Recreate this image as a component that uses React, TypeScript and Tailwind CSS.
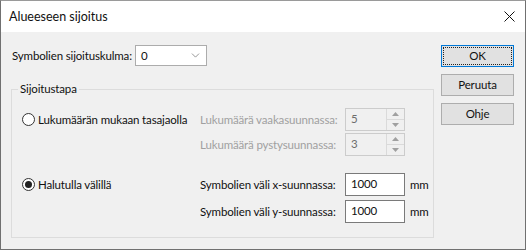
import { ChevronDown } from "lucide-react";

function Radio({ checked }: { checked?: boolean }) {
  return (
    <span className="grid size-[13px] shrink-0 place-items-center rounded-full border border-[#333] bg-white">
      {checked && <span className="size-[7px] rounded-full bg-[#222]" />}
    </span>
  );
}

function DlgButton({ label, focused }: { label: string; focused?: boolean }) {
  return (
    <button
      className={
        focused
          ? "grid h-[22px] w-[73px] place-items-center border border-[#0078d7] bg-[#e1e1e1] p-[1px]"
          : "grid h-[22px] w-[73px] place-items-center border border-[#adadad] bg-[#e1e1e1]"
      }
    >
      <span
        className={
          focused
            ? "grid h-full w-full place-items-center border border-dotted border-[#222]"
            : "grid h-full w-full place-items-center"
        }
      >
        {label}
      </span>
    </button>
  );
}

function SpinBox({ value }: { value: string }) {
  return (
    <div className="flex h-[23px] w-[60px] border border-[#cccccc] bg-[#f0f0f0]">
      <span className="flex-1 pl-[5px] pt-[2px] text-[#6d6d6d]">{value}</span>
      <span className="flex w-[18px] flex-col border-l border-[#dadada]">
        <span className="grid flex-1 place-items-center">
          <svg width="7" height="4" viewBox="0 0 7 4">
            <path d="M0 4 L3.5 0 L7 4 Z" fill="#a0a0a0" />
          </svg>
        </span>
        <span className="grid flex-1 place-items-center border-t border-[#dadada]">
          <svg width="7" height="4" viewBox="0 0 7 4">
            <path d="M0 0 L3.5 4 L7 0 Z" fill="#a0a0a0" />
          </svg>
        </span>
      </span>
    </div>
  );
}

function TextBox({ value }: { value: string }) {
  return (
    <div className="h-[23px] w-[60px] border border-[#7a7a7a] bg-white pl-[5px] pt-[2px]">
      {value}
    </div>
  );
}

export default function App() {
  return (
    <div className="h-[251px] w-[526px] bg-white font-['Segoe_UI','Lato',sans-serif] text-[11.5px] leading-[16px] tracking-[-0.15px] text-[#111]">
      <div className="flex h-[250px] w-[526px] flex-col border border-t-[#9a9a9a] border-x-[#707070] border-b-[#707070] bg-[#f0f0f0]">
        <div className="flex h-[31px] shrink-0 items-center justify-between bg-white pl-[8px] pr-[10px]">
          <span className="text-[12.5px] tracking-normal">Alueeseen sijoitus</span>
          <svg width="11" height="11" viewBox="0 0 11 11">
            <path d="M0.5 0.5 L10.5 10.5 M10.5 0.5 L0.5 10.5" stroke="#111" strokeWidth="1" />
          </svg>
        </div>

        <div className="flex flex-1 pl-[10px]">
          <div className="flex w-[430px] flex-col pt-[13px]">
            <div className="flex h-[21px] items-center">
              <span className="w-[124px] whitespace-nowrap pl-[1px]">Symbolien sijoituskulma:</span>
              <div className="flex h-[21px] w-[72px] items-center justify-between border border-[#acacac] bg-white pl-[5px] pr-[4px]">
                <span>0</span>
                <ChevronDown className="size-[13px] text-[#606060]" strokeWidth={1.2} />
              </div>
            </div>

            <fieldset className="mt-[15px] h-[157px] w-[423px] border border-[#dcdcdc] px-0">
              <legend className="ml-[6px] px-[2px]">Sijoitustapa</legend>

              <div className="flex flex-col pt-[11px]">
                <div className="flex h-[23px] items-center">
                  <div className="flex w-[188px] items-center gap-[3px] pl-[10px]">
                    <Radio />
                    <span className="whitespace-nowrap">Lukumäärän mukaan tasajaolla</span>
                  </div>
                  <span className="w-[145px] whitespace-nowrap text-[#a0a0a0]">Lukumäärä vaakasuunnassa:</span>
                  <SpinBox value="5" />
                </div>

                <div className="mt-[2px] flex h-[23px] items-center">
                  <div className="w-[188px]" />
                  <span className="w-[145px] whitespace-nowrap text-[#a0a0a0]">Lukumäärä pystysuunnassa:</span>
                  <SpinBox value="3" />
                </div>

                <div className="mt-[17px] flex h-[23px] items-center">
                  <div className="flex w-[188px] items-center gap-[3px] pl-[10px]">
                    <Radio checked />
                    <span className="whitespace-nowrap">Halutulla välillä</span>
                  </div>
                  <span className="w-[145px] whitespace-nowrap">Symbolien väli x-suunnassa:</span>
                  <TextBox value="1000" />
                  <span className="pl-[5px]">mm</span>
                </div>

                <div className="mt-[4px] flex h-[23px] items-center">
                  <div className="w-[188px]" />
                  <span className="w-[145px] whitespace-nowrap">Symbolien väli y-suunnassa:</span>
                  <TextBox value="1000" />
                  <span className="pl-[5px]">mm</span>
                </div>
              </div>
            </fieldset>
          </div>

          <div className="flex flex-col gap-[7px] pt-[13px]">
            <DlgButton label="OK" focused />
            <DlgButton label="Peruuta" />
            <DlgButton label="Ohje" />
          </div>
        </div>
      </div>
    </div>
  );
}
